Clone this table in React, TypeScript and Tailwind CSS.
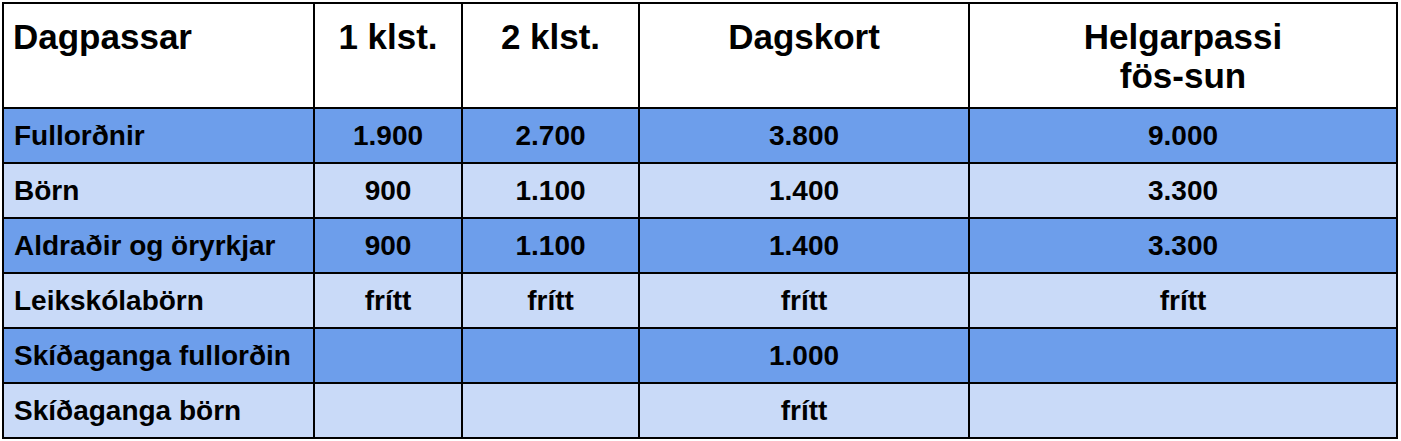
import React from "react";

type Row = { label: string; values: string[]; dark: boolean };

const rows: Row[] = [
  { label: "Fullorðnir", values: ["1.900", "2.700", "3.800", "9.000"], dark: true },
  { label: "Börn", values: ["900", "1.100", "1.400", "3.300"], dark: false },
  { label: "Aldraðir og öryrkjar", values: ["900", "1.100", "1.400", "3.300"], dark: true },
  { label: "Leikskólabörn", values: ["frítt", "frítt", "frítt", "frítt"], dark: false },
  { label: "Skíðaganga fullorðin", values: ["", "", "1.000", ""], dark: true },
  { label: "Skíðaganga börn", values: ["", "", "frítt", ""], dark: false },
];

const headers = ["1 klst.", "2 klst.", "Dagskort"];

const App = () => {
  return (
    <div className="w-[1401px] h-[441px] bg-white pt-[2px] pl-[2px]" style={{ fontFamily: '"Liberation Sans", Arial, sans-serif' }}>
      <div className="grid w-[1396px] grid-cols-[309px_146px_175px_328px_426px] grid-rows-[103px_repeat(6,53px)] gap-[2px] bg-black p-[2px] text-black font-bold">
        {/* Header */}
        <div className="bg-white pl-[9px] pt-[13px] text-[35px] leading-[39px]">Dagpassar</div>
        {headers.map((h) => (
          <div key={h} className="bg-white pt-[13px] text-center text-[35px] leading-[39px]">
            {h}
          </div>
        ))}
        <div className="bg-white pt-[13px] text-center text-[35px] leading-[39px]">
          Helgarpassi
          <br />
          fös-sun
        </div>

        {/* Body */}
        {rows.map((row) => {
          const bg = row.dark ? "bg-[#6d9eeb]" : "bg-[#c9daf8]";
          return (
            <React.Fragment key={row.label}>
              <div className={`${bg} flex items-center pl-[10px] text-[28px]`}>{row.label}</div>
              {row.values.map((v, i) => (
                <div key={i} className={`${bg} flex items-center justify-center text-[28px]`}>
                  {v}
                </div>
              ))}
            </React.Fragment>
          );
        })}
      </div>
    </div>
  );
};

export default App;
